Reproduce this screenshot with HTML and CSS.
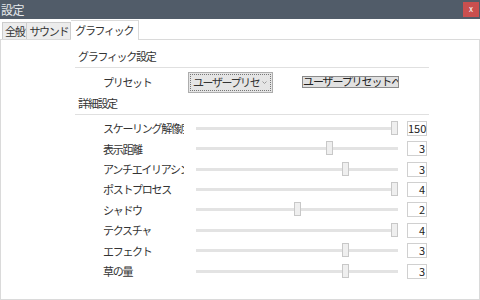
FILE: index.html
```html
<!DOCTYPE html>
<html lang="ja">

<head>
  <meta charset="UTF-8">
  <title>設定</title>
  <link rel="stylesheet" href="styles.css">
</head>

<body>
  <div class="window">
    <div class="titlebar">
      <span class="title">設定</span>
      <span class="close">x</span>
    </div>
    <div class="tab-header">
      <span class="tab-item">全般</span>
      <span class="tab-item">サウンド</span>
      <span class="tab-item active">グラフィック</span>
    </div>
    <div class="tab-panel">
      <div class="section">
        <div class="section-title">グラフィック設定</div>
        <div class="preset-row">
          <span class="label">プリセット</span>
          <div class="select">
            <div class="select-inner">
              <span class="select-text">ユーザープリセ</span>
              <svg class="chevron" width="5" height="3" viewBox="0 0 5 3"><path d="M0.5 0.5 L2.5 2.5 L4.5 0.5" fill="none" stroke="#9a9a9a" stroke-width="1"/></svg>
            </div>
          </div>
          <span class="button">ユーザープリセットへ</span>
        </div>
        <div class="section-title">詳細設定</div>
        <div class="rows">
          <div class="row">
            <span class="label">スケーリング解像度</span>
            <div class="slider"><span class="thumb" style="--p:1"></span></div>
            <span class="num">150</span>
          </div>
          <div class="row">
            <span class="label">表示距離</span>
            <div class="slider"><span class="thumb" style="--p:.665"></span></div>
            <span class="num">3</span>
          </div>
          <div class="row">
            <span class="label">アンチエイリアシング</span>
            <div class="slider"><span class="thumb" style="--p:.75"></span></div>
            <span class="num">3</span>
          </div>
          <div class="row">
            <span class="label">ポストプロセス</span>
            <div class="slider"><span class="thumb" style="--p:1"></span></div>
            <span class="num">4</span>
          </div>
          <div class="row">
            <span class="label">シャドウ</span>
            <div class="slider"><span class="thumb" style="--p:.5"></span></div>
            <span class="num">2</span>
          </div>
          <div class="row">
            <span class="label">テクスチャ</span>
            <div class="slider"><span class="thumb" style="--p:1"></span></div>
            <span class="num">4</span>
          </div>
          <div class="row">
            <span class="label">エフェクト</span>
            <div class="slider"><span class="thumb" style="--p:.75"></span></div>
            <span class="num">3</span>
          </div>
          <div class="row">
            <span class="label">草の量</span>
            <div class="slider"><span class="thumb" style="--p:.75"></span></div>
            <span class="num">3</span>
          </div>
        </div>
      </div>
    </div>
  </div>
</body>

</html>
```

FILE: styles.css
```css
body {
  margin: 0;
  font-family: "Noto Sans CJK JP", "Noto Sans", sans-serif;
  font-size: 11px;
  letter-spacing: -1.3px;
  color: #333;
  background: #fff;
}

.window {
  width: 480px;
  height: 300px;
  overflow: hidden;
}

.titlebar {
  height: 19px;
  background: #515c69;
  display: flex;
  justify-content: space-between;
  align-items: flex-start;
}

.titlebar .title {
  color: #e6e9ec;
  font-size: 12px;
  letter-spacing: -0.5px;
  line-height: 19px;
  padding-left: 1px;
}

.titlebar .close {
  width: 16px;
  height: 15px;
  margin-top: 2px;
  margin-right: 1px;
  background: #c94f4f;
  color: #fff;
  font-size: 8px;
  letter-spacing: 0;
  line-height: 14px;
  text-align: center;
}

.tab-header {
  display: flex;
  align-items: flex-end;
  padding-left: 2px;
  height: 20px;
  position: relative;
  z-index: 1;
}

.tab-item {
  height: 16px;
  line-height: 16px;
  padding: 0 2px;
  background: #ececec;
  border: 1px solid #cdcdcd;
  border-bottom: none;
  color: #333;
}

.tab-item + .tab-item {
  border-left: none;
}

.tab-item.active {
  height: 19px;
  line-height: 18px;
  padding: 0 5px 0 4px;
  background: #fff;
  border-color: #dadada;
  margin-bottom: -1px;
}

.tab-panel {
  height: 259px;
  border: 1px solid #dadada;
}

.section {
  margin-left: 74px;
  width: 354px;
}

.section-title {
  padding: 9px 0 4px 3px;
  line-height: 14px;
  border-bottom: 1px solid #e0e0e0;
}

.preset-row + .section-title {
  padding-top: 0;
}

.preset-row {
  height: 28px;
  display: flex;
  align-items: center;
}

.label {
  margin-left: 28px;
  width: 85px;
  white-space: nowrap;
  overflow: hidden;
}

.select {
  width: 85px;
  height: 21px;
  box-sizing: border-box;
  border: 1px solid #adadad;
  background: #e5e5e5;
  padding: 2px;
}

.select-inner {
  height: 15px;
  outline: 1px dotted #777;
  display: flex;
  align-items: center;
}

.select-text {
  flex: 1;
  line-height: 15px;
  font-size: 11px;
  letter-spacing: -1.4px;
  padding-left: 2px;
  white-space: nowrap;
  overflow: hidden;
}

.chevron {
  flex: none;
  margin: 1px 3px 0 2px;
}

.button {
  margin-left: 29px;
  width: 97px;
  height: 12px;
  box-sizing: border-box;
  border: 1px solid #8a8a8a;
  background: #e1e1e1;
  letter-spacing: -1.1px;
  line-height: 8px;
  white-space: nowrap;
  overflow: hidden;
  color: #222;
}

.rows {
  padding-top: 3px;
}

.row {
  height: 20.43px;
  display: flex;
  align-items: center;
}

.row .label {
  width: 81px;
  margin-right: 12px;
}

.slider {
  width: 202px;
  height: 3px;
  background: #e3e3e3;
  position: relative;
}

.thumb {
  position: absolute;
  top: -6px;
  left: calc((100% - 7px) * var(--p));
  width: 7px;
  height: 14px;
  box-sizing: border-box;
  background: #efefef;
  border: 1px solid #c8c8c8;
}

.num {
  margin-left: 9px;
  width: 20px;
  height: 15px;
  box-sizing: border-box;
  border: 1px solid #d0d0d0;
  text-align: right;
  letter-spacing: 0;
  line-height: 13px;
  padding-right: 1px;
  color: #222;
}
```
